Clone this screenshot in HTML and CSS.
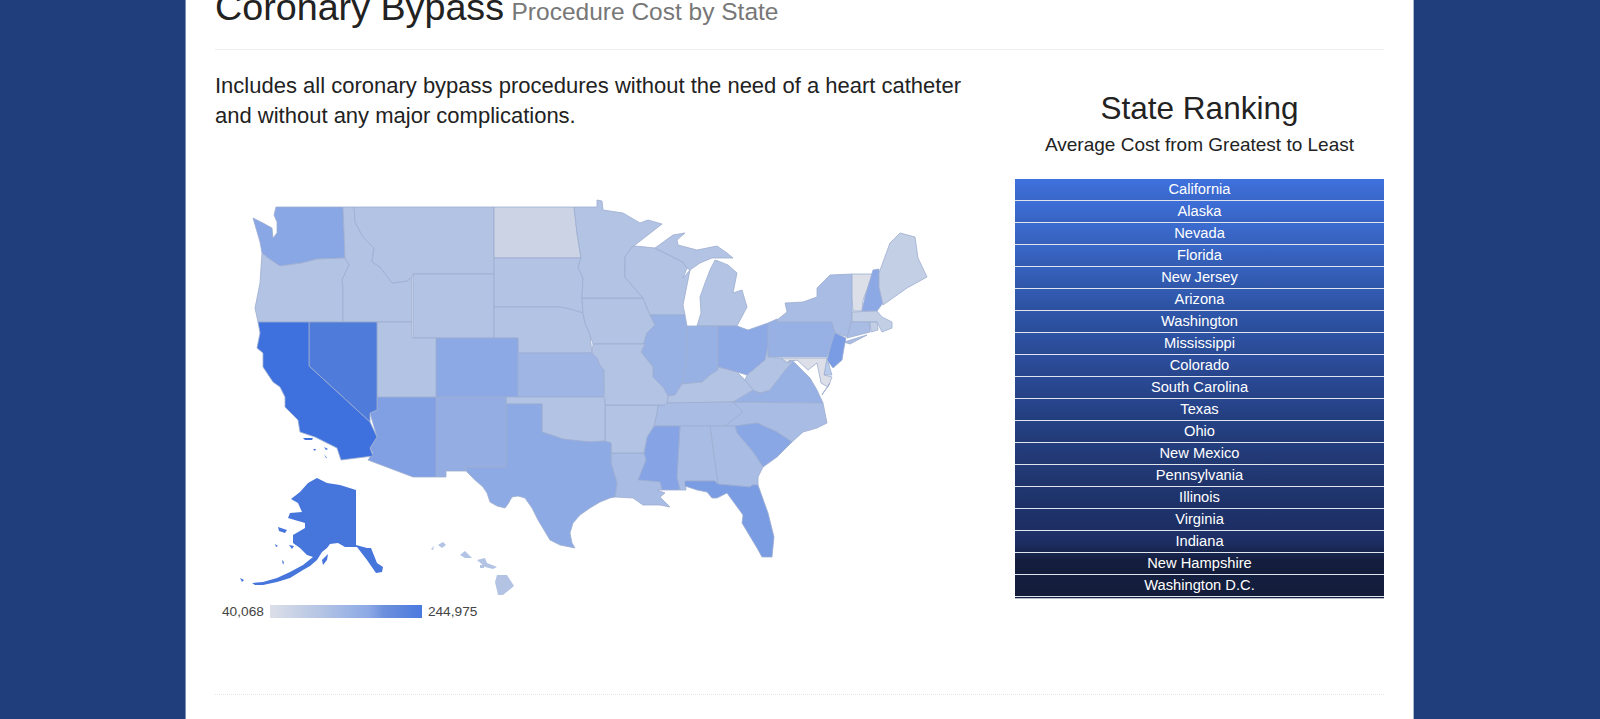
FILE: index.html
```html
<!DOCTYPE html>
<html lang="en">
<head>
<meta charset="utf-8">
<title>Coronary Bypass Procedure Cost by State</title>
<link rel="stylesheet" href="styles.css">
</head>
<body>
<main class="panel">
  <header class="page-header">
    <h1 class="title">Coronary Bypass <small class="subtitle">Procedure Cost by State</small></h1>
  </header>
  <div class="columns">
    <section class="map-col">
      <p class="lead">Includes all coronary bypass procedures without the need of a heart catheter and without any major complications.</p>
      <svg class="map" viewBox="215 190 720 412" role="img" aria-label="Map of average cost by state">
        <polygon class="st f-wa" points="276,207 343,207 345,258 317,259 302,263 280,266 268,258 262,253 260,242 253,218 263,223 272,228 273,238 277,233 277,222 274,215"/>
        <polygon class="st f-b" points="262,253 268,258 280,266 302,263 317,259 345,258 349,265 342,280 343,287 343,322 258,322 255,308 260,283"/>
        <polygon class="st f-b" points="343,207 354,207 355,222 363,237 374,248 372,262 380,267 392,283 407,281 412,277 412,322 343,322 343,287 342,280 349,265 345,258"/>
        <polygon class="st f-b" points="354,207 494,207 494,274 413,274 412,277 407,281 392,283 380,267 372,262 374,248 363,237 355,222"/>
        <polygon class="st f-b" points="413,274 494,274 494,338 413,338"/>
        <polygon class="st f-nd" points="494,207 574,207 577,233 581,258 494,258"/>
        <polygon class="st f-b" points="494,258 581,258 578,267 583,278 582,298 583,313 570,309 560,307 494,307"/>
        <polygon class="st f-b" points="494,307 560,307 570,309 583,313 585,323 590,335 592,353 518,353 518,338 494,338"/>
        <polygon class="st f-co" points="436,338 518,338 518,397 436,397"/>
        <polygon class="st f-ks" points="518,353 592,353 597,358 600,365 604,370 604,397 518,397"/>
        <polygon class="st f-b" points="582,298 643,298 650,315 655,325 647,333 645,344 593,344 590,335 585,323 583,313"/>
        <polygon class="st f-b" points="574,207 597,207 597,200 602,201 603,210 623,213 640,223 648,220 662,224 635,245 632,247 625,257 625,277 643,298 582,298 583,278 578,267 581,258 577,233"/>
        <polygon class="st f-b" points="635,246 655,248 683,262 687,268 683,278 690,270 686,290 683,305 685,315 650,315 643,298 625,277 625,257 632,247"/>
        <polygon class="st f-b" points="655,248 673,235 685,233 677,240 678,245 697,250 717,246 727,253 733,258 718,258 712,258 700,263 690,270 687,268 683,262"/>
        <polygon class="st f-b" points="715,260 718,261 728,265 737,273 733,293 742,290 747,307 737,326 697,326 701,313 700,297 705,283 710,270"/>
        <polygon class="st f-il" points="650,315 685,315 687,326 686,365 682,384 675,395 668,396 663,387 653,377 653,367 641,352 647,333 655,325"/>
        <polygon class="st f-il" points="687,326 718,326 718,370 710,375 702,382 682,384 686,365"/>
        <polygon class="st f-oh" points="718,326 737,326 748,330 768,323 768,347 765,360 747,375 737,372 718,367"/>
        <polygon class="st f-il" points="768,323 777,319 777,322 832,322 835,333 831,345 827,357 768,357"/>
        <polygon class="st f-ny" points="777,320 787,312 785,303 803,302 817,297 817,288 830,275 852,274 852,318 848,337 835,333 832,322 777,322"/>
        <polygon class="st f-ny" points="844,342 867,335 850,344"/>
        <polygon class="st f-lt" points="852,274 873,274 863,300 862,311 853,311 852,297"/>
        <polygon class="st f-nh" points="873,270 879,269 879,287 883,303 877,311 862,311 865,297"/>
        <polygon class="st f-me" points="879,273 890,243 900,233 915,237 918,258 927,277 907,288 883,305 879,287"/>
        <polygon class="st f-me" points="852,312 877,311 882,317 892,322 892,328 882,332 877,322 852,322"/>
        <polygon class="st f-ny" points="851,322 870,322 870,332 847,338"/>
        <polygon class="st f-me" points="870,322 877,322 878,330 871,332"/>
        <polygon class="st f-nj" points="835,333 846,338 844,348 842,360 833,368 827,360 831,345"/>
        <polygon class="st f-de" points="824,362 828,362 832,375 824,375"/>
        <polygon class="st f-lt" points="781,358 827,358 824,375 832,377 828,387 821,383 817,363 808,370 797,360 787,363"/>
        <polygon class="st f-va" points="733,402 753,390 760,393 770,390 777,377 790,360 795,363 810,378 817,390 823,403"/>
        <polygon class="st f-va" points="823,393 830,383 822,395"/>
        <polygon class="st f-b" points="768,347 768,357 781,358 787,363 794,360 783,373 770,390 760,393 753,390 745,380 747,375 765,360"/>
        <polygon class="st f-b" points="718,367 737,372 745,380 753,390 733,402 667,403 668,396 675,395 682,384 702,382 710,375 718,370"/>
        <polygon class="st f-ny" points="658,405 665,405 667,403 733,402 755,403 743,412 725,426 654,426 657,412"/>
        <polygon class="st f-ny" points="733,402 823,403 827,423 817,428 803,432 792,442 777,432 757,423 735,426 725,426 743,412"/>
        <polygon class="st f-wa" points="735,426 757,423 777,432 792,442 777,457 763,467 753,452 737,433"/>
        <polygon class="st f-ny" points="710,426 735,426 737,433 753,452 763,467 758,477 758,485 752,485 750,487 718,484 716,470"/>
        <polygon class="st f-ny" points="680,426 710,426 716,470 718,484 715,481 685,481 686,490 680,490 677,477"/>
        <polygon class="st f-ms" points="654,426 680,426 677,477 680,490 672,490 662,490 660,482 638,480 643,457 647,437"/>
        <polygon class="st f-fl" points="685,481 715,481 718,484 750,487 752,485 758,485 768,513 774,537 772,557 762,557 757,548 748,533 742,523 743,515 727,493 717,498 712,498 707,492 697,490 685,486"/>
        <polygon class="st f-ny" points="611,453 644,453 646,460 638,480 660,482 662,490 657,490 665,493 660,497 665,502 670,507 660,505 643,505 633,498 615,497 617,483 611,463"/>
        <polygon class="st f-b" points="605,405 658,405 657,412 654,426 647,437 644,453 611,453 611,443 605,441"/>
        <polygon class="st f-b" points="593,344 645,344 641,352 653,367 653,377 663,387 668,396 667,403 665,405 658,405 605,405 604,370 600,365 597,358 592,353"/>
        <polygon class="st f-b" points="506,397 604,397 605,405 605,441 590,442 570,442 563,439 542,432 542,404 506,404"/>
        <polygon class="st f-tx" points="506,404 542,404 542,432 563,439 590,442 605,441 611,443 611,463 617,483 615,497 610,498 600,502 590,508 580,515 573,523 570,533 572,543 575,548 570,547 560,545 550,540 544,530 538,520 532,508 525,498 518,496 512,497 508,504 505,508 497,506 490,502 487,493 483,487 475,480 467,472 465,467 506,467"/>
        <polygon class="st f-nm" points="436,397 506,397 506,467 465,467 467,471 446,471 446,477 436,477"/>
        <polygon class="st f-az" points="377,397 436,397 436,477 413,477 368,460 373,453 370,448 377,437 370,413 377,410"/>
        <polygon class="st f-b" points="377,322 412,322 412,338 436,338 436,397 377,397"/>
        <polygon class="st f-nv" points="309,322 377,322 377,410 370,413 370,422 309,366"/>
        <polygon class="st f-ca" points="258,322 309,322 309,366 370,422 377,437 370,448 373,456 341,460 337,448 315,437 300,432 298,420 285,407 285,397 280,387 273,382 263,367 263,353 257,348 260,333"/>
        <polygon class="f-ca" points="303,438 313,438 312,440 305,440"/>
        <polygon class="f-ca" points="313,449 316,449 315,451"/>
        <polygon class="f-ca" points="324,447 328,449 326,450"/>
        <polygon class="f-ca" points="324,454 327,458 326,458"/>
        <polygon class="f-ak" points="317,478 327,483 340,485 356,490 356,545 367,548 371,548 377,563 383,567 382,572 376,573 367,560 357,547 345,547 338,543 330,544 327,548 322,552 317,560 310,566 303,570 290,578 277,582 263,585 255,585 252,583 263,582 277,578 290,572 303,565 313,557 307,555 300,548 293,543 293,535 305,528 305,523 288,518 290,513 302,512 298,503 291,499 300,492 308,483"/>
        <polygon class="f-ak" points="322,560 328,554 327,560 323,565"/>
        <polygon class="f-ak" points="278,527 287,530 285,533 279,531"/>
        <polygon class="f-ak" points="240,578 244,580 242,582"/>
        <polygon class="f-ak" points="275,544 278,546 276,547"/>
        <polygon class="f-ak" points="289,545 294,546 292,549"/>
        <polygon class="f-ak" points="282,560 284,562 283,565"/>
        <polygon class="f-b" points="497,575 507,575 514,586 503,595 498,595 495,582"/>
        <polygon class="f-b" points="477,560 485,558 487,563 497,567 493,569 485,567"/>
        <polygon class="f-b" points="460,555 465,551 472,558 465,558"/>
        <polygon class="f-b" points="438,545 443,542 446,545 442,548"/>
        <polygon class="f-b" points="431,549 434,546 433,550"/>
        <polygon class="f-b" points="480,565 484,565 484,568 480,568"/>
      </svg>
      <div class="legend">
        <span class="legend-value">40,068</span>
        <span class="legend-bar"></span>
        <span class="legend-value">244,975</span>
      </div>
    </section>
    <aside class="rank-col">
      <h2 class="rank-title">State Ranking</h2>
      <p class="rank-sub">Average Cost from Greatest to Least</p>
      <ol class="rank-list">
        <li>California</li>
        <li>Alaska</li>
        <li>Nevada</li>
        <li>Florida</li>
        <li>New Jersey</li>
        <li>Arizona</li>
        <li>Washington</li>
        <li>Mississippi</li>
        <li>Colorado</li>
        <li>South Carolina</li>
        <li>Texas</li>
        <li>Ohio</li>
        <li>New Mexico</li>
        <li>Pennsylvania</li>
        <li>Illinois</li>
        <li>Virginia</li>
        <li>Indiana</li>
        <li>New Hampshire</li>
        <li>Washington D.C.</li>
      </ol>
    </aside>
  </div>
  <hr class="rule">
</main>
</body>
</html>
```
FILE: styles.css
```css
* { box-sizing: border-box; }
html, body { height: 100%; }
body {
  margin: 0;
  overflow: hidden;
  background: #213e7c;
  font-family: "Liberation Sans", Arial, sans-serif;
  color: #222;
}
.panel {
  width: 1229px;
  height: 719px;
  margin-left: 185px;
  padding: 0 29px;
  background: #fff;
  border-left: 1px solid #7d90b8;
  border-right: 1px solid #aab6cc;
}
.page-header {
  display: flow-root;
  height: 50px;
  border-bottom: 1px solid #eee;
}
.title {
  margin: -13px 0 0;
  font-size: 37.7px;
  line-height: 40px;
  font-weight: 400;
}
.subtitle {
  margin-left: -3px;
  font-size: 24.5px;
  color: #777;
}
.columns {
  display: flex;
  justify-content: space-between;
  height: 644px;
}
.map-col { width: 780px; }
.lead {
  width: 760px;
  margin: 21px 0 0;
  font-size: 22px;
  line-height: 30px;
  color: #222;
}
.map {
  display: block;
  width: 720px;
  height: 412px;
  margin-top: 59px;
}
.st { stroke: #9dadd0; stroke-width: 0.8; stroke-linejoin: round; }
.f-b  { fill: #b2c3e4; }
.f-nd { fill: #ccd3e4; }
.f-lt { fill: #dcdfe8; }
.f-me { fill: #c3cfe5; }
.f-ny { fill: #a9bce4; }
.f-de { fill: #b9cbea; }
.f-ks { fill: #9fb6e5; }
.f-il { fill: #98b1e5; }
.f-oh { fill: #8ca8e5; }
.f-va { fill: #98b1e5; }
.f-co { fill: #8ca9e6; }
.f-nm { fill: #94aee4; }
.f-tx { fill: #8eaae5; }
.f-wa { fill: #89a6e5; }
.f-ms { fill: #86a4e5; }
.f-nh { fill: #8ca9e6; }
.f-az { fill: #80a0e3; }
.f-nj { fill: #7a9ce5; }
.f-fl { fill: #7a9ce3; }
.f-nv { fill: #4f7bdb; }
.f-ak { fill: #4675dc; }
.f-ca { fill: #3f71de; }
.legend {
  display: flex;
  align-items: center;
  gap: 6px;
  margin-top: 3px;
  padding-left: 7px;
  font-size: 13.7px;
  line-height: 13px;
  color: #444;
}
.legend-bar {
  width: 152px;
  height: 13px;
  background: linear-gradient(90deg, #dcdfe8, #b2c3e4 35%, #8ca9e6 65%, #6c90dc 75%, #4a79df);
}
.rank-col {
  width: 369px;
  text-align: center;
}
.rank-title {
  margin: 40px 0 0;
  font-size: 31.5px;
  line-height: 36px;
  font-weight: 400;
}
.rank-sub {
  margin: 7px 0 0;
  font-size: 19px;
  line-height: 24px;
}
.rank-list {
  margin: 22px 0 0;
  padding: 0 0 1px;
  list-style: none;
  border-bottom: 1px solid #b7bcc9;
  background: linear-gradient(180deg, #3f71de 0%, #3a69cb 15%, #3058ad 30%, #2b4c9a 45%, #243f80 62%, #203670 75%, #1d2f66 87%, #141e3f 91%, #141e3f 100%);
}
.rank-list li {
  height: 22.03px;
  line-height: 21px;
  border-bottom: 1px solid #e0e4ec;
  font-size: 14.7px;
  color: #fff;
  background: linear-gradient(180deg, rgba(0, 0, 0, 0), rgba(0, 0, 0, 0.07));
}
.rule {
  margin: 0;
  border: 0;
  border-top: 1px dotted #e4e6e0;
}
```
